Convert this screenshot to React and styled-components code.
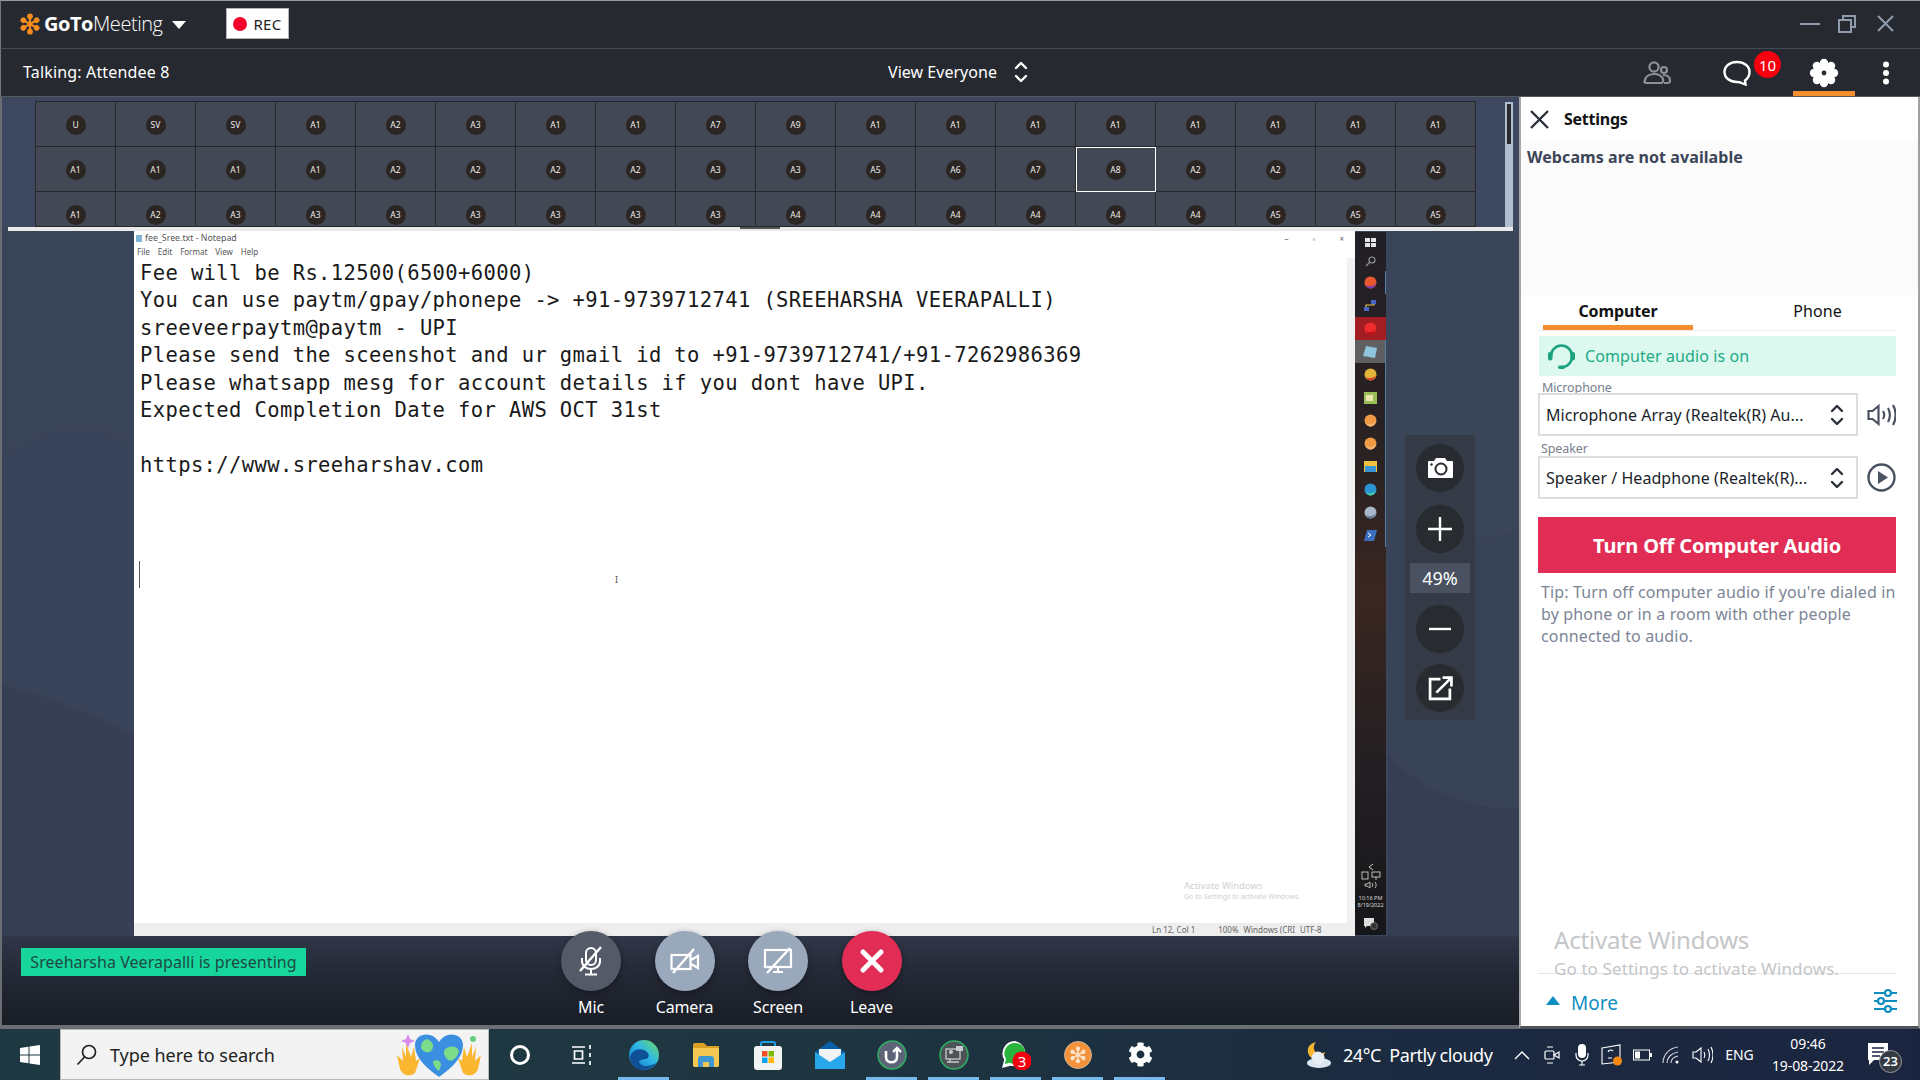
import React from "react";
import styled, { createGlobalStyle } from "styled-components";
import { FaCog } from "react-icons/fa";

const UI = `"Noto Sans", "Open Sans", sans-serif`;

const GlobalStyle = createGlobalStyle`
  html, body { margin: 0; padding: 0; background: #26292f; }
  * { box-sizing: border-box; }
`;

const Page = styled.div`
  width: 1920px;
  height: 1080px;
  display: flex;
  flex-direction: column;
  overflow: hidden;
  font-family: ${UI};
`;

// barra de titulo
const TitleBar = styled.header`
  height: 49px;
  flex: none;
  display: flex;
  align-items: center;
  background: #26292f;
  border-top: 1px solid #9a9a9a;
  border-left: 1px solid #777;
  border-bottom: 1px solid #454b55;
  padding: 0 26px 2px 18px;
`;

const Logo = styled.div`
  display: flex;
  align-items: center;
  width: 207px;
  color: #fff;
  font-family: "Open Sans", sans-serif;
  font-size: 20px;
  letter-spacing: -0.45px;
  b { font-weight: 700; margin-left: 3px; }
  span { font-weight: 300; }
  i { margin-left: 9px; border: 6px solid transparent; border-top: 8px solid #fff; border-left-width: 7px; border-right-width: 7px; margin-top: 8px; }
`;

const RecBadge = styled.div`
  width: 63px;
  height: 31px;
  background: #fff;
  border: 1px solid #b5b5b5;
  display: flex;
  align-items: center;
  justify-content: center;
  gap: 6px;
  color: #222;
  font-size: 15px;
  letter-spacing: 0.3px;
  &::before { content: ""; width: 14px; height: 14px; border-radius: 50%; background: #f3032b; }
`;

const WindowButtons = styled.div`
  margin-left: auto;
  display: flex;
  align-items: center;
  gap: 21px;
  color: #8f9cae;
  svg:first-child { margin-right: -3px; }
`;

const StatusBar = styled.div`
  height: 48px;
  flex: none;
  display: flex;
  align-items: center;
  background: #26292f;
  border-bottom: 1px solid #55585e;
  border-left: 1px solid #777;
  padding-left: 22px;
  color: #fff;
  font-size: 16px;
  position: relative;
`;

const Talking = styled.div`
  width: 865px;
  margin-top: -2px;
  font-size: 16px;
  letter-spacing: 0.16px;
`;

const ViewEveryone = styled.div`
  display: flex;
  align-items: center;
  gap: 17px;
  margin-top: -2px;
  letter-spacing: 0.03px;
`;

const StatusIcons = styled.div`
  margin-left: auto;
  height: 100%;
  display: flex;
  align-items: center;
`;

const StatusIcon = styled.div`
  width: ${(p) => p.$w}px;
  height: 100%;
  display: flex;
  align-items: center;
  justify-content: center;
  position: relative;
  padding: 5px ${(p) => p.$pr || 0}px 0 0;
  border-bottom: 5px solid ${(p) => (p.$active ? "#f68d2e" : "transparent")};
`;

const ChatBadge = styled.span`
  position: absolute;
  left: 57px;
  top: 2px;
  width: 27px;
  height: 27px;
  border-radius: 50%;
  background: #f5000f;
  color: #fff;
  font-size: 15px;
  display: flex;
  align-items: center;
  justify-content: center;
`;

const Main = styled.main`
  flex: 1;
  display: flex;
  min-height: 0;
`;

const Stage = styled.section`
  flex: 1;
  min-width: 0;
  display: flex;
  flex-direction: column;
  position: relative;
  background: #3b4559;
  border-left: 2px solid #6a6d72;
  border-bottom: 4px solid #6b6e73;
`;

const StageArt = styled.svg`
  position: absolute;
  inset: 0;
  width: 100%;
  height: 100%;
`;

// galeria de participantes
const Gallery = styled.div`
  height: 130px;
  flex: none;
  position: relative;
  padding: 4px 0 0 33px;
  background: #3d4860;
  overflow: hidden;
`;

const GalleryGrid = styled.div`
  width: 1441px;
  height: 126px;
  overflow: hidden;
  display: grid;
  grid-template-columns: repeat(18, 80px);
  grid-auto-rows: 45px;
  border-top: 1px solid #25272b;
  border-left: 1px solid #25272b;
  border-bottom: 1px solid #25272b;
`;

const Tile = styled.div`
  display: flex;
  align-items: center;
  justify-content: center;
  padding-top: 1px;
  background: #434855;
  border-right: 1px solid #25272b;
  border-bottom: 1px solid #25272b;
  outline: ${(p) => (p.$active ? "1px solid #fff" : "none")};
  outline-offset: -1px;
`;

const Avatar = styled.span`
  width: 20px;
  height: 20px;
  border-radius: 50%;
  background: #2b2523;
  color: #eee;
  font-size: 8.5px;
  display: flex;
  align-items: center;
  justify-content: center;
`;

const GalleryScroll = styled.div`
  position: absolute;
  right: 6px;
  top: 5px;
  bottom: 0;
  width: 8px;
  background: #b1bdd0;
  padding: 2px;
  &::before { content: ""; display: block; height: 40px; background: #2a2a2c; }
`;

const GalleryEdge = styled.div`
  height: 4px;
  flex: none;
  margin: 0 6px;
  background: #e9e9e9;
  position: relative;
  &::after { content: ""; position: absolute; left: 732px; top: 0; width: 40px; height: 2px; background: #555; }
`;

const ShareRow = styled.div`
  flex: 1;
  min-height: 0;
  display: flex;
  padding-left: 132px;
  position: relative;
`;

const Notepad = styled.div`
  width: 1221px;
  height: 705px;
  background: #fff;
  display: flex;
  flex-direction: column;
  position: relative;
`;

const NpTitle = styled.div`
  height: 14px;
  flex: none;
  display: flex;
  align-items: center;
  gap: 3px;
  padding-left: 2px;
  font-size: 8.8px;
  color: #555;
  &::before { content: ""; width: 6px; height: 7px; background: #7fb4d6; }
`;

const NpControls = styled.span`
  margin-left: auto;
  display: flex;
  gap: 24px;
  padding-right: 11px;
  color: #666;
  font-size: 8px;
`;

const NpMenu = styled.div`
  height: 13px;
  flex: none;
  display: flex;
  align-items: center;
  gap: 8px;
  padding-left: 3px;
  font-size: 8px;
  color: #555;
`;

const NpBody = styled.div`
  flex: 1;
  min-height: 0;
  display: flex;
`;

const NpText = styled.div`
  flex: 1;
  padding: 2px 0 0 6px;
  font-family: "DejaVu Sans Mono", monospace;
  font-size: 20.5px;
  letter-spacing: 0.38px;
  line-height: 27.4px;
  color: #1a1a1a;
`;

const NpLine = styled.div`
  height: 27.4px;
  white-space: pre;
`;

const Caret = styled.div`
  width: 1px;
  height: 27px;
  margin-left: -1px;
  background: #555;
`;

const IBeam = styled.span`
  position: absolute;
  left: 481px;
  top: 342px;
  color: #555;
  font-size: 9px;
`;

const NpScroll = styled.div`
  width: 8px;
  flex: none;
  background: #f1f1f1;
`;

const NpStatus = styled.div`
  height: 13px;
  flex: none;
  background: #eeeeee;
  display: flex;
  align-items: center;
  padding-left: 1018px;
  font-size: 8px;
  color: #666;
  span { margin-right: 5px; white-space: nowrap; }
  span:first-child { margin-right: 23px; }
`;

const NpActivate = styled.div`
  position: absolute;
  left: 1050px;
  top: 649px;
  color: #cfcfcf;
  font-size: 9.5px;
  line-height: 12px;
  white-space: nowrap;
  small { display: block; font-size: 7px; line-height: 9px; }
`;

// barra de tarefas remota
const RemoteBar = styled.div`
  width: 31px;
  height: 703px;
  flex: none;
  margin-top: 1px;
  display: flex;
  flex-direction: column;
  align-items: center;
  background: linear-gradient(180deg, #211f26 0%, #2c2222 35%, #3a2620 52%, #241f22 75%, #16171a 100%);
`;

const RemoteSlot = styled.div`
  width: 100%;
  height: ${(p) => p.$h || 23}px;
  flex: none;
  display: flex;
  align-items: center;
  justify-content: center;
  background: ${(p) => p.$bg || "transparent"};
  border-right: 1px solid ${(p) => (p.$run ? "#4b7ea8" : "transparent")};
`;

const RemoteTray = styled.div`
  margin-top: auto;
  width: 100%;
  display: flex;
  flex-direction: column;
  align-items: center;
  color: #ddd;
  font-size: 5.5px;
  line-height: 7px;
  padding-bottom: 5px;
  white-space: nowrap;
`;

const RemoteClock = styled.div`
  margin: 6px 0 8px;
  text-align: center;
`;

const Rail = styled.div`
  width: 70px;
  height: 285px;
  flex: none;
  margin: 204px 0 0 19px;
  background: #343b46;
  display: flex;
  flex-direction: column;
  align-items: center;
  padding-top: 9px;
  position: relative;
`;

const RailButton = styled.div`
  width: 48px;
  height: 48px;
  flex: none;
  border-radius: 50%;
  background: #282b2f;
  display: flex;
  align-items: center;
  justify-content: center;
  margin-bottom: ${(p) => p.$mb || 0}px;
`;

const ZoomValue = styled.div`
  width: 60px;
  height: 30px;
  flex: none;
  background: #4a5160;
  color: #fff;
  font-size: 18px;
  display: flex;
  align-items: center;
  justify-content: center;
  margin-bottom: 12px;
`;

// controles inferiores
const Controls = styled.div`
  height: 89px;
  flex: none;
  display: flex;
  align-items: flex-start;
  padding: 12px 0 0 19px;
  background: linear-gradient(180deg, #303748 0%, #232835 45%, #191d25 100%);
  position: relative;
`;

const Presenting = styled.div`
  width: 285px;
  height: 28px;
  background: #16d69c;
  color: #1d4a44;
  font-size: 16px;
  letter-spacing: 0.05px;
  display: flex;
  align-items: center;
  justify-content: center;
  white-space: nowrap;
`;

const ActionGroup = styled.div`
  display: flex;
  gap: 33.5px;
  margin: -17px 0 0 255px;
`;

const Action = styled.div`
  width: 60px;
  display: flex;
  flex-direction: column;
  align-items: center;
  gap: 5px;
  color: #fff;
  font-size: 16px;
  letter-spacing: -0.1px;
  white-space: nowrap;
`;

const ActionCircle = styled.div`
  width: 60px;
  height: 60px;
  border-radius: 50%;
  background: ${(p) => p.$bg};
  box-shadow: 0 2px 6px rgba(0, 0, 0, 0.35);
  display: flex;
  align-items: center;
  justify-content: center;
`;

// painel de configuracoes
const Panel = styled.aside`
  width: 401px;
  flex: none;
  display: flex;
  flex-direction: column;
  position: relative;
  background: #fff;
  border-left: 2px solid #a8a8a8;
  border-right: 2px solid #a0a0a0;
  border-bottom: 3px solid #50535a;
`;

const PanelHeader = styled.div`
  height: 44px;
  flex: none;
  display: flex;
  align-items: center;
  gap: 15px;
  padding-left: 9px;
  font-size: 16px;
  font-weight: 700;
  letter-spacing: -0.25px;
  color: #111;
`;

const WebcamBox = styled.div`
  height: 154px;
  flex: none;
  background: #fbfbfb;
  padding: 5px 0 0 6px;
  font-size: 16px;
  font-weight: 700;
  letter-spacing: 0.08px;
  color: #3c4558;
`;

const PanelBody = styled.div`
  display: flex;
  flex-direction: column;
  padding: 0 22px 0 17px;
`;

const Tabs = styled.div`
  height: 36px;
  display: flex;
  border-bottom: 1px solid #eee;
`;

const Tab = styled.div`
  height: 35px;
  width: ${(p) => (p.$active ? "150px" : "auto")};
  flex: ${(p) => (p.$active ? "none" : "1")};
  margin-left: ${(p) => (p.$active ? "5px" : "0")};
  display: flex;
  align-items: center;
  justify-content: center;
  font-size: 16px;
  letter-spacing: ${(p) => (p.$active ? "-0.1px" : "0.1px")};
  font-weight: ${(p) => (p.$active ? 700 : 400)};
  color: #111;
  border-bottom: ${(p) => (p.$active ? "5px solid #f68d2e" : "none")};
  padding-top: ${(p) => (p.$active ? "2px" : "0")};
  padding-left: ${(p) => (p.$active ? "0" : "46px")};
  padding-bottom: ${(p) => (p.$active ? "0" : "4px")};
`;

const AudioOn = styled.div`
  height: 40px;
  margin: 5px 0 0 1px;
  background: #dcf8ef;
  display: flex;
  align-items: center;
  gap: 9px;
  padding-left: 8px;
  color: #21ab85;
  font-size: 16px;
  letter-spacing: 0.1px;
`;

const FieldLabel = styled.div`
  height: ${(p) => p.$h}px;
  margin-top: ${(p) => p.$mt}px;
  padding-top: ${(p) => p.$pt || 0}px;
  padding-left: ${(p) => p.$pl}px;
  font-size: 12.5px;
  line-height: 12px;
  letter-spacing: -0.1px;
  color: #777e8c;
`;

const FieldRow = styled.div`
  display: flex;
  align-items: center;
  justify-content: space-between;
`;

const SelectBox = styled.div`
  width: 320px;
  height: 43px;
  border: 2px solid #ddd;
  display: flex;
  align-items: center;
  justify-content: space-between;
  padding: 0 12px 0 6px;
  font-size: 16px;
  letter-spacing: 0.04px;
  color: #1a1f2b;
  white-space: nowrap;
`;

const TurnOff = styled.div`
  height: 56px;
  margin-top: 18px;
  padding-top: 1px;
  background: #e12d55;
  color: #fff;
  font-size: 20px;
  font-weight: 700;
  letter-spacing: -0.1px;
  display: flex;
  align-items: center;
  justify-content: center;
`;

const Tip = styled.p`
  margin: 8px 0 0 3px;
  font-size: 16px;
  line-height: 22px;
  letter-spacing: 0.15px;
  color: #7c8595;
  white-space: pre-line;
`;

const PanelFooter = styled.div`
  margin: auto 22px 0 17px;
  height: 53px;
  border-top: 1px solid #e4e6e8;
  display: flex;
  align-items: center;
  color: #0e8ec0;
  font-size: 19px;
  padding: 6px 0 0 8px;
  gap: 11px;
  &::before { content: ""; border: 7px solid transparent; border-top: 0; border-bottom: 9px solid #0e8ec0; margin-top: -6px; }
`;

const SliderIcon = styled.svg`
  margin-left: auto;
  margin-right: -1px;
  margin-top: -4px;
`;

const ActivateNote = styled.div`
  position: absolute;
  left: 33px;
  top: 828px;
  color: #c4c6c8;
  font-size: 24px;
  letter-spacing: -0.2px;
  line-height: 30px;
  white-space: nowrap;
  small { display: block; font-size: 17px; line-height: 28px; letter-spacing: 0.1px; }
`;

// barra de tarefas do windows
const Taskbar = styled.footer`
  height: 51px;
  flex: none;
  display: flex;
  align-items: center;
  background: linear-gradient(90deg, #1f3942 0%, #1f3640 40%, #1b2a40 75%, #1b2540 100%);
  color: #fff;
`;

const StartButton = styled.div`
  width: 60px;
  height: 100%;
  display: flex;
  align-items: center;
  justify-content: center;
`;

const SearchBox = styled.div`
  width: 429px;
  height: 100%;
  flex: none;
  background: #f3f3f3;
  border: 1px solid #b9b9b9;
  display: flex;
  align-items: center;
  gap: 12px;
  padding-left: 15px;
  color: #222;
  font-size: 18px;
  letter-spacing: -0.05px;
`;

const SearchArt = styled.svg`
  margin-left: auto;
  margin-right: 5px;
`;

const TaskSlot = styled.div`
  width: 62px;
  height: 100%;
  flex: none;
  display: flex;
  align-items: center;
  justify-content: center;
  position: relative;
  &::after {
    content: "";
    display: ${(p) => (p.$running ? "block" : "none")};
    position: absolute;
    bottom: 0;
    left: 5px;
    right: 6px;
    height: 3px;
    background: #76b9ed;
  }
`;

const Tray = styled.div`
  margin-left: auto;
  display: flex;
  align-items: center;
  height: 100%;
  padding-right: 17px;
  font-size: 16px;
`;

const Weather = styled.div`
  width: 203px;
  display: flex;
  align-items: center;
  gap: 11px;
  font-size: 18px;
  letter-spacing: -0.45px;
  white-space: nowrap;
`;

const TrayIcon = styled.div`
  width: 30px;
  display: flex;
  align-items: center;
  justify-content: center;
`;

const Lang = styled.div`
  width: 45px;
  text-align: center;
  font-size: 14px;
  letter-spacing: -0.1px;
`;

const Clock = styled.div`
  width: 92px;
  text-align: center;
  font-size: 14px;
  line-height: 22px;
  letter-spacing: -0.1px;
`;

const Notify = styled.div`
  width: 49px;
  display: flex;
  justify-content: center;
  position: relative;
`;

const NotifyCount = styled.span`
  position: absolute;
  left: 25px;
  top: 7px;
  width: 23px;
  height: 23px;
  border-radius: 50%;
  background: #343a42;
  border: 1px solid #999;
  font-size: 13px;
  font-weight: 600;
  display: flex;
  align-items: center;
  justify-content: center;
`;

const row1 = "U SV SV A1 A2 A3 A1 A1 A7 A9 A1 A1 A1 A1 A1 A1 A1 A1".split(" ");
const row2 = "A1 A1 A1 A1 A2 A2 A2 A2 A3 A3 A5 A6 A7 A8 A2 A2 A2 A2".split(" ");
const row3 = "A1 A2 A3 A3 A3 A3 A3 A3 A3 A4 A4 A4 A4 A4 A4 A5 A5 A5".split(" ");
const tiles = [...row1, ...row2, ...row3];

const noteLines = [
  "Fee will be Rs.12500(6500+6000)",
  "You can use paytm/gpay/phonepe -> +91-9739712741 (SREEHARSHA VEERAPALLI)",
  "sreeveerpaytm@paytm - UPI",
  "Please send the sceenshot and ur gmail id to +91-9739712741/+91-7262986369",
  "Please whatsapp mesg for account details if you dont have UPI.",
  "Expected Completion Date for AWS OCT 31st",
  " ",
  "https://www.sreeharshav.com",
  " ",
  " ",
  " ",
];

const petals = [0, 60, 120, 180, 240, 300];

const Asterisk = ({ size = 24, color = "#f68d1e" }) => (
  <svg width={size} height={size} viewBox="0 0 24 24">
    {petals.map((a) => (
      <g key={a} transform={`rotate(${a} 12 12)`}>
        <line x1="12" y1="12" x2="12" y2="4" stroke={color} strokeWidth="2.4" />
        <circle cx="12" cy="3.6" r="3.1" fill={color} />
      </g>
    ))}
    <circle cx="12" cy="12" r="2.4" fill={color} />
  </svg>
);

const UpDown = ({ color = "#2b303b", w = 14, h = 22, sw = 2.4 }) => (
  <svg width={w} height={h} viewBox="0 0 14 22" fill="none" stroke={color} strokeWidth={sw} strokeLinecap="round" strokeLinejoin="round">
    <path d="M2 7l5-5 5 5M2 15l5 5 5-5" />
  </svg>
);

const GearFlower = () => (
  <svg width="30" height="30" viewBox="0 0 30 30">
    {[0, 45, 90, 135, 180, 225, 270, 315].map((a) => (
      <circle key={a} cx="15" cy="5" r="4.200" fill="#fff" transform={`rotate(${a} 15 15)`} />
    ))}
    <circle cx="15" cy="15" r="8.500" fill="#fff" />
    <circle cx="15" cy="15" r="2.400" fill="#26292f" />
  </svg>
);

const Ball = ({ a, b }) => (
  <svg width="13" height="13" viewBox="0 0 13 13">
    <circle cx="6.500" cy="6.500" r="6" fill={a} />
    <path d="M2 9c3 2 7 2 10-2-1 4-4 6-6 5.500-2 0-3-1.500-4-3.500z" fill={b} />
  </svg>
);

const remoteApps = [
  {
    h: 20,
    icon: (
      <svg width="11" height="9" viewBox="0 0 11 9" fill="#e4e4e4">
        <path d="M0 0h5v4H0zM6 0h5v4H6zM0 5h5v4H0zM6 5h5v4H6z" />
      </svg>
    ),
  },
  {
    h: 19,
    icon: (
      <svg width="11" height="11" viewBox="0 0 11 11" fill="none" stroke="#9a9a9a" strokeWidth="1.100">
        <circle cx="7" cy="4" r="3" />
        <path d="M4.500 6.500L1 10" />
      </svg>
    ),
  },
  { icon: <Ball a="#e8582c" b="#7b3fb5" />, run: true },
  {
    icon: (
      <svg width="13" height="11" viewBox="0 0 13 11">
        <path d="M7 0h5v4H7zM0 7h5v4H0z" fill="#4a66c4" />
        <path d="M2 7V5h8V4" fill="none" stroke="#e3c14c" strokeWidth="1.200" />
      </svg>
    ),
  },
  { bg: "#a31e22", icon: <Ball a="#ef2b2d" b="#b81014" /> },
  {
    bg: "#5f5f62",
    run: true,
    icon: (
      <svg width="14" height="12" viewBox="0 0 14 12">
        <path d="M3 0l11 2-2 10L0 10z" fill="#8fc6de" />
      </svg>
    ),
  },
  { run: true, icon: <Ball a="#e2b53a" b="#d83b2f" /> },
  {
    run: true,
    icon: (
      <svg width="13" height="12" viewBox="0 0 13 12">
        <rect width="13" height="12" fill="#9bbf58" />
        <path d="M2 3h7v6H2z" fill="#e9e4b0" />
      </svg>
    ),
  },
  { run: true, icon: <Ball a="#f09a45" b="#f4b677" /> },
  { run: true, icon: <Ball a="#f09a45" b="#f4b677" /> },
  {
    run: true,
    icon: (
      <svg width="13" height="11" viewBox="0 0 13 11">
        <rect width="13" height="11" fill="#f0c040" />
        <rect x="1" y="5" width="11" height="6" fill="#3a93d5" />
      </svg>
    ),
  },
  { run: true, icon: <Ball a="#2a93d5" b="#47cba0" /> },
  { run: true, icon: <Ball a="#a9b8c8" b="#5f7a96" /> },
  {
    run: true,
    icon: (
      <svg width="13" height="11" viewBox="0 0 13 11">
        <path d="M3 0h10l-3 11H0z" fill="#3a6fc0" />
        <path d="M4 3l3 2-3 2" fill="none" stroke="#fff" strokeWidth="1" />
      </svg>
    ),
  },
];

export default function App() {
  return (
    <Page>
      <GlobalStyle />
      <TitleBar>
        <Logo>
          <Asterisk size={22} />
          <b>GoTo</b>
          <span>Meeting</span>
          <i />
        </Logo>
        <RecBadge>REC</RecBadge>
        <WindowButtons>
          <svg width="20" height="18" viewBox="0 0 20 18"><path d="M0 9h20" stroke="currentColor" strokeWidth="2" /></svg>
          <svg width="18" height="18" viewBox="0 0 18 18" fill="none" stroke="currentColor" strokeWidth="2"><path d="M5 5V1h12v11h-4" /><rect x="1" y="5" width="12" height="12" /></svg>
          <svg width="17" height="17" viewBox="0 0 17 17" stroke="currentColor" strokeWidth="2"><path d="M1 1l15 15M16 1L1 16" /></svg>
        </WindowButtons>
      </TitleBar>

      <StatusBar>
        <Talking>Talking: Attendee 8</Talking>
        <ViewEveryone>
          View Everyone
          <UpDown color="#fff" />
        </ViewEveryone>
        <StatusIcons>
          <StatusIcon $w={62} $pr={18}>
            <svg width="28" height="24" viewBox="0 0 28 24" fill="none" stroke="#8e9196" strokeWidth="2.2">
              <circle cx="11" cy="6" r="4.6" />
              <circle cx="21" cy="9" r="3" />
              <path d="M1.500 22c0-6 4-9 9.500-9s8 2.500 9 5c.6 2.600-.5 4-2 4H3.500c-1.500 0-2-.5-2-2z" />
              <path d="M20 14c4 0 7 2 7 5.500 0 1.500-.5 2.500-2 2.500h-4" />
            </svg>
          </StatusIcon>
          <StatusIcon $w={96} $pr={16}>
            <svg width="28" height="26" viewBox="0 0 28 26" fill="none" stroke="#fff" strokeWidth="2.4">
              <path d="M14 2C7 2 1.500 6 1.500 12S7 22 14 22c2 0 3 0 4.500 1l4 1.500-.5-4c2.800-2 4.500-5 4.500-8.500C26.500 6 21 2 14 2z" />
            </svg>
            <ChatBadge>10</ChatBadge>
          </StatusIcon>
          <StatusIcon $w={62} $active>
            <GearFlower />
          </StatusIcon>
          <StatusIcon $w={65} $pr={4}>
            <svg width="8" height="24" viewBox="0 0 8 24" fill="#fff">
              <circle cx="4" cy="3.500" r="3" />
              <circle cx="4" cy="12" r="3" />
              <circle cx="4" cy="20.500" r="3" />
            </svg>
          </StatusIcon>
        </StatusIcons>
      </StatusBar>

      <Main>
        <Stage>
          <StageArt viewBox="0 0 1517 932" preserveAspectRatio="none">
            <path d="M0 360 C40 330 90 320 132 350 L132 932 L0 932Z" fill="#36405a" opacity="0.4" />
            <path d="M0 590 C40 600 90 620 132 640 L132 932 L0 932Z" fill="#333c50" opacity="0.5" />
            <path d="M1386 420 C1430 440 1470 450 1517 435 L1517 932 L1386 932Z" fill="#394257" opacity="0.6" />
            <path d="M1386 660 C1420 700 1470 715 1517 715 L1517 932 L1386 932Z" fill="#343c50" opacity="0.6" />
          </StageArt>

          <Gallery>
            <GalleryGrid>
              {tiles.map((t, i) => (
                <Tile key={i} $active={i === 18 + 13}>
                  <Avatar>{t}</Avatar>
                </Tile>
              ))}
            </GalleryGrid>
            <GalleryScroll />
          </Gallery>
          <GalleryEdge />

          <ShareRow>
            <Notepad>
              <NpTitle>
                fee_Sree.txt - Notepad
                <NpControls>
                  <span>–</span>
                  <span>▫</span>
                  <span>×</span>
                </NpControls>
              </NpTitle>
              <NpMenu>
                <span>File</span>
                <span>Edit</span>
                <span>Format</span>
                <span>View</span>
                <span>Help</span>
              </NpMenu>
              <NpBody>
                <NpText>
                  {noteLines.map((l, i) => (
                    <NpLine key={i}>{l}</NpLine>
                  ))}
                  <Caret />
                </NpText>
                <NpScroll />
              </NpBody>
              <NpStatus>
                <span>Ln 12, Col 1</span>
                <span>100%</span>
                <span>Windows (CRI</span>
                <span>UTF-8</span>
              </NpStatus>
              <IBeam>I</IBeam>
              <NpActivate>
                Activate Windows
                <small>Go to Settings to activate Windows.</small>
              </NpActivate>
            </Notepad>

            <RemoteBar>
              {remoteApps.map((app, i) => (
                <RemoteSlot key={i} $h={app.h} $bg={app.bg} $run={app.run}>
                  {app.icon}
                </RemoteSlot>
              ))}
              <RemoteTray>
                <svg width="6" height="8" viewBox="0 0 6 8" fill="none" stroke="#ccc"><path d="M5 1L1 4l4 3" /></svg>
                <svg width="24" height="10" viewBox="0 0 24 10" fill="none" stroke="#ccc" strokeWidth="0.900">
                  <rect x="3" y="1" width="6" height="7" />
                  <rect x="13" y="1" width="8" height="5" />
                  <path d="M17 6v3" />
                </svg>
                <svg width="14" height="8" viewBox="0 0 14 8" fill="none" stroke="#ccc" strokeWidth="0.900">
                  <path d="M1 3h2l3-2v6L3 5H1zM8 2c1 1 1 3 0 4M11 1c1.500 2 1.500 4 0 6" />
                </svg>
                <RemoteClock>
                  10:16 PM
                  <br />
                  8/19/2022
                </RemoteClock>
                <svg width="16" height="13" viewBox="0 0 16 13">
                  <path d="M1 1h10v8H4l-2 2V9H1z" fill="#ddd" />
                  <circle cx="11" cy="9" r="3.500" fill="#333" stroke="#999" strokeWidth="0.600" />
                </svg>
              </RemoteTray>
            </RemoteBar>

            <Rail>
              <RailButton $mb={13}>
                <svg width="27" height="22" viewBox="0 0 27 22">
                  <path d="M2 4h5l2-3h9l2 3h5a1 1 0 011 1v15a1 1 0 01-1 1H2a1 1 0 01-1-1V5a1 1 0 011-1z" fill="#fff" />
                  <circle cx="14" cy="12" r="5.500" fill="none" stroke="#282b2f" strokeWidth="2" />
                  <circle cx="4.500" cy="7.500" r="1.200" fill="#282b2f" />
                </svg>
              </RailButton>
              <RailButton $mb={10}>
                <svg width="24" height="24" viewBox="0 0 24 24" stroke="#fff" strokeWidth="2.4"><path d="M0 12h24M12 0v24" /></svg>
              </RailButton>
              <ZoomValue>49%</ZoomValue>
              <RailButton $mb={11}>
                <svg width="22" height="4" viewBox="0 0 22 4" stroke="#fff" strokeWidth="2.4"><path d="M0 2h22" /></svg>
              </RailButton>
              <RailButton>
                <svg width="25" height="25" viewBox="0 0 24 24" fill="none" stroke="#fff" strokeWidth="2.6">
                  <path d="M12 3H2v19h19V12" />
                  <path d="M8 16L22 2M14 1.500h8.500V10" />
                </svg>
              </RailButton>
            </Rail>
          </ShareRow>

          <Controls>
            <Presenting>Sreeharsha Veerapalli is presenting</Presenting>
            <ActionGroup>
              <Action>
                <ActionCircle $bg="#545a67">
                  <svg width="28" height="30" viewBox="0 0 28 30" fill="none" stroke="#fff" strokeWidth="2">
                    <rect x="9" y="2" width="10" height="17" rx="5" />
                    <path d="M5 12v3c0 5 4 8 9 8s9-3 9-8v-3M14 23v5M8 28.500h12" />
                    <path d="M24 1L3 25" strokeWidth="2.400" />
                  </svg>
                </ActionCircle>
                Mic
              </Action>
              <Action>
                <ActionCircle $bg="#9aa8bb">
                  <svg width="30" height="26" viewBox="0 0 30 26" fill="none" stroke="#fff" strokeWidth="2.200">
                    <rect x="1.500" y="7" width="19" height="14" />
                    <path d="M21 12l7-4v12l-7-4" />
                    <path d="M24 1L3 25" strokeWidth="2.400" />
                  </svg>
                </ActionCircle>
                Camera
              </Action>
              <Action>
                <ActionCircle $bg="#9aa8bb">
                  <svg width="30" height="28" viewBox="0 0 30 28" fill="none" stroke="#fff" strokeWidth="2.200">
                    <rect x="2" y="3" width="26" height="17" />
                    <path d="M15 20v4M10 25h10" />
                    <path d="M27 1L4 26" strokeWidth="2.400" />
                  </svg>
                </ActionCircle>
                Screen
              </Action>
              <Action>
                <ActionCircle $bg="#e12d55">
                  <svg width="26" height="26" viewBox="0 0 26 26" stroke="#fff" strokeWidth="5" strokeLinecap="round">
                    <path d="M4 4l18 18M22 4L4 22" />
                  </svg>
                </ActionCircle>
                Leave
              </Action>
            </ActionGroup>
          </Controls>
        </Stage>

        <Panel>
          <PanelHeader>
            <svg width="19" height="19" viewBox="0 0 19 19" stroke="#2b303b" strokeWidth="2.400"><path d="M1 1l17 17M18 1L1 18" /></svg>
            Settings
          </PanelHeader>
          <WebcamBox>Webcams are not available</WebcamBox>
          <PanelBody>
            <Tabs>
              <Tab $active>Computer</Tab>
              <Tab>Phone</Tab>
            </Tabs>
            <AudioOn>
              <svg width="29" height="28" viewBox="0 0 29 28" fill="none" stroke="#1ba37f" strokeWidth="2.600">
                <path d="M4 14a10.500 10.500 0 0121 0c0 6-4 10.500-9 11" />
                <rect x="1" y="10" width="4.500" height="8.500" rx="2" fill="#1ba37f" stroke="none" />
                <rect x="23.500" y="10" width="4.500" height="8.500" rx="2" fill="#1ba37f" stroke="none" />
                <rect x="11" y="23.500" width="7" height="3.500" rx="1.700" fill="#1ba37f" stroke="none" />
              </svg>
              Computer audio is on
            </AudioOn>
            <FieldLabel $h={17} $mt={0} $pt={6} $pl={4}>Microphone</FieldLabel>
            <FieldRow>
              <SelectBox>
                Microphone Array (Realtek(R) Au...
                <UpDown />
              </SelectBox>
              <svg width="29" height="24" viewBox="0 0 29 24" fill="none" stroke="#4a5261" strokeWidth="2.200">
                <path d="M1.500 8h4l6-5v18l-6-5h-4z" />
                <path d="M16 8c1.500 2.500 1.500 5.500 0 8M21 5c2.500 4 2.500 10 0 14M26 2c3.500 6 3.500 14 0 20" />
              </svg>
            </FieldRow>
            <FieldLabel $h={13} $mt={7} $pl={3}>Speaker</FieldLabel>
            <FieldRow>
              <SelectBox>
                Speaker / Headphone (Realtek(R)...
                <UpDown />
              </SelectBox>
              <svg width="29" height="29" viewBox="0 0 29 29" fill="none" stroke="#4a5261" strokeWidth="2.400">
                <circle cx="14.500" cy="14.500" r="13" />
                <path d="M11 8l10 6.500L11 21z" fill="#4a5261" stroke="none" />
              </svg>
            </FieldRow>
            <TurnOff>Turn Off Computer Audio</TurnOff>
            <Tip>{"Tip: Turn off computer audio if you're dialed in\nby phone or in a room with other people\nconnected to audio."}</Tip>
          </PanelBody>
          <ActivateNote>
            Activate Windows
            <small>Go to Settings to activate Windows.</small>
          </ActivateNote>
          <PanelFooter>
            More
            <SliderIcon width="24" height="26" viewBox="0 0 24 26" fill="none" stroke="#0e8ec0" strokeWidth="2.200">
              <path d="M1 5h23M1 13h23M1 21h23" />
              <circle cx="15" cy="5" r="3" fill="#fff" />
              <circle cx="8" cy="13" r="3" fill="#fff" />
              <circle cx="15" cy="21" r="3" fill="#fff" />
            </SliderIcon>
          </PanelFooter>
        </Panel>
      </Main>

      <Taskbar>
        <StartButton>
          <svg width="20" height="20" viewBox="0 0 20 20" fill="#fff">
            <path d="M0 3l8.500-1.300v7.800H0zM9.500 1.500L20 0v9.500H9.500zM0 10.500h8.500v7.800L0 17zM9.500 10.500H20V20L9.500 18.500z" />
          </svg>
        </StartButton>
        <SearchBox>
          <svg width="22" height="22" viewBox="0 0 22 22" fill="none" stroke="#222" strokeWidth="1.700">
            <circle cx="13" cy="8" r="6.500" />
            <path d="M8.500 13L1.500 20.500" />
          </svg>
          Type here to search
          <SearchArt width="88" height="48" viewBox="0 0 88 48">
            <path d="M2 24l6 6-1-14 4 10 0-14 5 14 3-10 2 14 4-3-5 15c-5 4-12 3-15-4z" fill="#f9b62e" />
            <path d="M86 24l-6 6 1-14-4 10 0-14-5 14-3-10-2 14-4-3 5 15c5 4 12 3 15-4z" fill="#f9b62e" />
            <path d="M44 46C30 36 20 26 20 14 20 6 28 2 35 4c4 1 7 4 9 7 2-3 5-6 9-7 7-2 15 2 15 10 0 12-10 22-24 32z" fill="#3b8fe0" />
            <path d="M32 8c6 2 8 8 4 12-3 3-8 1-10-3 0-5 2-8 6-9zM50 18c6-4 12-3 14 2-2 8-8 12-12 8-3-3-4-7-2-10zM38 30c4-2 8 0 8 4l-2 6c-3-2-6-6-6-10z" fill="#7ddc8a" />
            <path d="M13 3l2 5 5 2-5 2-2 5-2-5-5-2 5-2z" fill="#d98af0" />
            <circle cx="78" cy="8" r="3" fill="#67d07c" />
          </SearchArt>
        </SearchBox>
        <TaskSlot>
          <svg width="22" height="22" viewBox="0 0 22 22" fill="none" stroke="#fff" strokeWidth="3"><circle cx="11" cy="11" r="8.500" /></svg>
        </TaskSlot>
        <TaskSlot>
          <svg width="22" height="24" viewBox="0 0 22 24" fill="none" stroke="#fff" strokeWidth="1.700">
            <path d="M1 4h13M1 20h13M3.500 8h8v8h-8zM19 2v4M19 10v4M19 18v4" />
          </svg>
        </TaskSlot>
        <TaskSlot $running>
          <svg width="30" height="30" viewBox="0 0 30 30">
            <defs>
              <linearGradient id="edgeBg" x1="0" y1="1" x2="1" y2="0">
                <stop offset="0" stopColor="#0c6ac0" />
                <stop offset="0.55" stopColor="#2fb7e8" />
                <stop offset="1" stopColor="#6fdc5d" />
              </linearGradient>
            </defs>
            <circle cx="15" cy="15" r="15" fill="url(#edgeBg)" />
            <path d="M1 17C3 9 13 7 18 12c3 3 2 7-2 7-4 1-6 1-6 3 1 4 9 6 17 1-4 7-15 9-21 4-3-3-5-6-5-10z" fill="#0f4f95" />
          </svg>
        </TaskSlot>
        <TaskSlot>
          <svg width="28" height="24" viewBox="0 0 28 24">
            <path d="M1 2a2 2 0 012-2h9l3 3h12v19a2 2 0 01-2 2H3a2 2 0 01-2-2z" fill="#d9a024" />
            <path d="M1 5h26v17a2 2 0 01-2 2H3a2 2 0 01-2-2z" fill="#f4c752" />
            <path d="M6 24v-8a3 3 0 013-3h10a3 3 0 013 3v8h-5v-5h-6v5z" fill="#3d97d3" />
          </svg>
        </TaskSlot>
        <TaskSlot>
          <svg width="30" height="30" viewBox="0 0 30 30">
            <path d="M8 8V4a2 2 0 012-2h10a2 2 0 012 2v4" fill="none" stroke="#1ba1e2" strokeWidth="2" />
            <rect x="1" y="6" width="28" height="24" rx="3" fill="#f3f3f3" />
            <rect x="9" y="11" width="5.500" height="5.500" fill="#f25022" />
            <rect x="15.500" y="11" width="5.500" height="5.500" fill="#7fba00" />
            <rect x="9" y="17.500" width="5.500" height="5.500" fill="#00a4ef" />
            <rect x="15.500" y="17.500" width="5.500" height="5.500" fill="#ffb900" />
          </svg>
        </TaskSlot>
        <TaskSlot>
          <svg width="30" height="28" viewBox="0 0 30 28">
            <path d="M0 11L15 0l15 11v17H0z" fill="#0b5fa8" />
            <path d="M4 8h22v8L15 23 4 16z" fill="#f1f4f7" />
            <path d="M0 11l15 10 15-10v17H0z" fill="#28a8ea" />
          </svg>
        </TaskSlot>
        <TaskSlot $running>
          <svg width="30" height="30" viewBox="0 0 30 30" fill="none">
            <circle cx="15" cy="15" r="14" fill="#5e6478" stroke="#2fae63" strokeWidth="1.500" />
            <path d="M9 11v6c0 7 11 7 11 0v-7" stroke="#fff" strokeWidth="2.600" />
            <path d="M16 12l4-4 4 4" stroke="#fff" strokeWidth="2.400" />
          </svg>
        </TaskSlot>
        <TaskSlot $running>
          <svg width="30" height="30" viewBox="0 0 30 30" fill="none">
            <circle cx="15" cy="15" r="14" fill="#4e5358" stroke="#2fae63" strokeWidth="1.500" />
            <rect x="7" y="9" width="14" height="10" stroke="#c8ccd0" strokeWidth="1.300" />
            <rect x="17" y="6" width="7" height="5" fill="#c8ccd0" />
            <circle cx="12" cy="12" r="2" fill="#c8ccd0" />
            <path d="M11 19v3h8M8 22h12" stroke="#c8ccd0" strokeWidth="1.300" />
          </svg>
        </TaskSlot>
        <TaskSlot $running>
          <svg width="30" height="30" viewBox="0 0 30 30">
            <path d="M14 1a12.500 12.500 0 00-10.800 18.800L1 28l8.400-2.200A12.500 12.500 0 1014 1z" fill="#fff" />
            <path d="M14 3a10.500 10.500 0 00-9 16l-1.200 5 5-1.300A10.500 10.500 0 1014 3z" fill="#29b43c" />
            <circle cx="21" cy="21" r="9.500" fill="#f5000f" />
            <text x="21" y="26.500" textAnchor="middle" fontSize="15" fontFamily="Noto Sans" fill="#fff">3</text>
          </svg>
        </TaskSlot>
        <TaskSlot $running>
          <svg width="28" height="28" viewBox="0 0 28 28">
            <circle cx="14" cy="14" r="13.500" fill="#f3923a" stroke="#cbb49c" strokeWidth="1" />
            <g transform="translate(4 4) scale(0.83)">
              {petals.map((a) => (
                <g key={a} transform={`rotate(${a} 12 12)`}>
                  <line x1="12" y1="12" x2="12" y2="5" stroke="#fde3c8" strokeWidth="2" />
                  <circle cx="12" cy="4.500" r="2.600" fill="#fde3c8" />
                </g>
              ))}
            </g>
          </svg>
        </TaskSlot>
        <TaskSlot $running>
          <FaCog size={25} color="#fff" />
        </TaskSlot>

        <Tray>
          <Weather>
            <svg width="28" height="28" viewBox="0 0 28 28">
              <path d="M12 1c-3 3-3 9 1 11 3 1 6 0 8-1-1 5-5 8-10 7-5-1-8-5-7-10 1-4 4-6 8-7z" fill="#f5b52e" />
              <ellipse cx="15" cy="22" rx="12" ry="5" fill="#dbe7f0" />
              <circle cx="14" cy="17" r="6.500" fill="#e8f0f6" />
            </svg>
            24°C&nbsp; Partly cloudy
          </Weather>
          <TrayIcon>
            <svg width="16" height="10" viewBox="0 0 16 10" fill="none" stroke="#fff" strokeWidth="1.400"><path d="M1 9l7-7 7 7" /></svg>
          </TrayIcon>
          <TrayIcon>
            <svg width="16" height="20" viewBox="0 0 16 20" fill="none" stroke="#fff" strokeWidth="1.200">
              <rect x="1" y="6" width="9" height="8" rx="1" />
              <path d="M10 10l5-3v6zM3 2h6M3 18h6" />
            </svg>
          </TrayIcon>
          <TrayIcon>
            <svg width="14" height="22" viewBox="0 0 14 22" fill="#fff">
              <rect x="3" y="0" width="8" height="14" rx="4" />
              <path d="M1 9v2a6 6 0 0012 0V9M7 17v4M4 21h6" fill="none" stroke="#fff" strokeWidth="1.200" />
            </svg>
          </TrayIcon>
          <TrayIcon>
            <svg width="22" height="22" viewBox="0 0 22 22">
              <path d="M1 4l18-3v17l-18 2z" fill="none" stroke="#fff" strokeWidth="1.100" />
              <path d="M7 8a3 3 0 015-1M7 14h4" fill="none" stroke="#fff" strokeWidth="1.100" />
              <circle cx="16.500" cy="17" r="4.500" fill="#f58a10" />
            </svg>
          </TrayIcon>
          <TrayIcon>
            <svg width="19" height="12" viewBox="0 0 19 12">
              <rect x="0.500" y="1" width="16" height="10" fill="none" stroke="#fff" />
              <rect x="2" y="2.500" width="5" height="7" fill="#fff" />
              <rect x="17" y="4" width="2" height="4" fill="#fff" />
            </svg>
          </TrayIcon>
          <TrayIcon>
            <svg width="20" height="18" viewBox="0 0 20 18" fill="none" stroke="#cfd4da" strokeWidth="1.100">
              <path d="M1 17C1 9 7 2 16 1M5 17c0-5 4-10 11-11M9 17c0-3 2-6 7-7" />
              <circle cx="15" cy="16" r="1.500" fill="#fff" stroke="none" />
            </svg>
          </TrayIcon>
          <TrayIcon>
            <svg width="21" height="18" viewBox="0 0 21 18" fill="none" stroke="#fff" strokeWidth="1.100">
              <path d="M1 6h3l5-4v14l-5-4H1z" />
              <path d="M12 6c1 2 1 4 0 6M16 3c2 4 2 8 0 12M19 1c2.500 5 2.500 11 0 16" />
            </svg>
          </TrayIcon>
          <Lang>ENG</Lang>
          <Clock>
            09:46
            <br />
            19-08-2022
          </Clock>
          <Notify>
            <svg width="22" height="24" viewBox="0 0 22 24" fill="#fff">
              <path d="M0 0h20v17H6l-5 5v-5H0z" />
              <path d="M4 5h12M4 9h12M4 13h8" stroke="#1b2540" strokeWidth="1.500" />
            </svg>
            <NotifyCount>23</NotifyCount>
          </Notify>
        </Tray>
      </Taskbar>
    </Page>
  );
}
